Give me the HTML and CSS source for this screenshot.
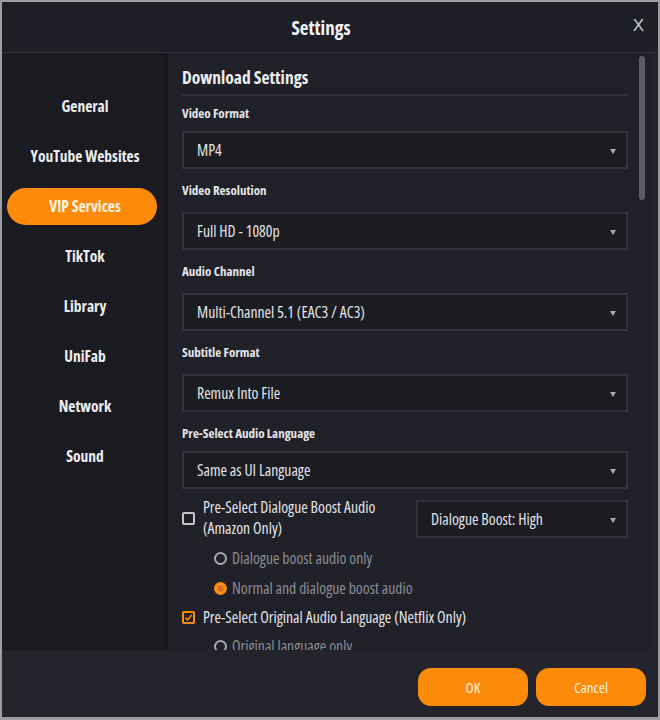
FILE: index.html
```html
<!DOCTYPE html>
<html>
<head>
<meta charset="utf-8">
<link rel="stylesheet" href="styles.css">
</head>
<body>
<div class="window">
  <header class="titlebar">
    <div class="title">Settings</div>
    <div class="close">X</div>
  </header>
  <div class="main">
    <nav class="sidebar">
      <div class="nav-item">General</div>
      <div class="nav-item">YouTube Websites</div>
      <div class="nav-item active">VIP Services</div>
      <div class="nav-item">TikTok</div>
      <div class="nav-item">Library</div>
      <div class="nav-item">UniFab</div>
      <div class="nav-item">Network</div>
      <div class="nav-item">Sound</div>
    </nav>
    <section class="content">
      <div class="scroll">
        <h2 class="section-title">Download Settings</h2>
        <div class="field first">
          <div class="label">Video Format</div>
          <div class="select"><span>MP4</span><i class="arrow"></i></div>
        </div>
        <div class="field">
          <div class="label">Video Resolution</div>
          <div class="select"><span>Full HD - 1080p</span><i class="arrow"></i></div>
        </div>
        <div class="field">
          <div class="label">Audio Channel</div>
          <div class="select"><span>Multi-Channel 5.1 (EAC3 / AC3)</span><i class="arrow"></i></div>
        </div>
        <div class="field">
          <div class="label">Subtitle Format</div>
          <div class="select"><span>Remux Into File</span><i class="arrow"></i></div>
        </div>
        <div class="field last">
          <div class="label">Pre-Select Audio Language</div>
          <div class="select"><span>Same as UI Language</span><i class="arrow"></i></div>
        </div>
        <div class="check-row">
          <div class="check-left">
            <span class="checkbox"></span>
            <span class="check-text">Pre-Select Dialogue Boost Audio<br>(Amazon Only)</span>
          </div>
          <div class="select small"><span>Dialogue Boost: High</span><i class="arrow"></i></div>
        </div>
        <div class="radio-row first"><span class="radio"></span><span>Dialogue boost audio only</span></div>
        <div class="radio-row"><span class="radio on"></span><span>Normal and dialogue boost audio</span></div>
        <div class="check-row2">
          <span class="checkbox on"><svg viewBox="0 0 10 10" width="9" height="9"><path d="M1.5 5.2 L4 7.6 L8.6 2.2" fill="none" stroke="#ff8c00" stroke-width="1.6"/></svg></span>
          <span class="check-text">Pre-Select Original Audio Language (Netflix Only)</span>
        </div>
        <div class="radio-row"><span class="radio"></span><span>Original language only</span></div>
      </div>
      <div class="scrollbar"></div>
    </section>
  </div>
  <footer class="footer">
    <button class="btn">OK</button>
    <button class="btn">Cancel</button>
  </footer>
</div>
</body>
</html>
```
FILE: styles.css
```css
* { box-sizing: border-box; }
html, body { margin: 0; padding: 0; }
body {
  width: 660px;
  height: 720px;
  background: #8d8e92;
  font-family: "Open Sans", "Noto Sans", "Liberation Sans", sans-serif;
  font-stretch: 75%;
  color: #e8e8ea;
  overflow: hidden;
}
.window {
  width: 660px;
  height: 720px;
  border: 2px solid #9c9da1;
  border-bottom-width: 3px;
  background: #22232b;
  display: flex;
  flex-direction: column;
}
.titlebar {
  height: 51px;
  flex: none;
  background: #1e1f26;
  border-bottom: 1px solid #30313a;
  display: flex;
  align-items: center;
  justify-content: center;
  position: relative;
}
.title {
  font-size: 19px;
  font-weight: bold;
  color: #f2f2f4;
  margin-left: -18px;
  margin-top: 2px;
}
.close {
  position: absolute;
  right: 14px;
  top: 14px;
  font-size: 17px;
  color: #c9cad0;
  font-family: "Liberation Sans", sans-serif;
  font-stretch: normal;
}
.main {
  height: 597px;
  flex: none;
  display: flex;
}
.sidebar {
  width: 164px;
  flex: none;
  background: #1a1b21;
  padding-top: 35px;
  padding-left: 5px;
  padding-right: 9px;
  display: flex;
  flex-direction: column;
  gap: 13px;
}
.nav-item {
  height: 37px;
  line-height: 37px;
  text-align: center;
  font-size: 15.5px;
  font-weight: bold;
  color: #eeeef0;
  border-radius: 19px;
  padding-left: 6px;
}
.nav-item.active {
  background: #fd8b0a;
  color: #fff4e6;
}
.content {
  flex: 1;
  background: #1f2028;
  border-left: 2px solid #17181d;
  margin-right: 6px;
  position: relative;
  overflow: hidden;
}
.scroll {
  padding: 11px 24px 0 14px;
}
.section-title {
  margin: 0;
  font-size: 17.5px;
  font-weight: bold;
  color: #eeeef0;
  height: 32px;
  line-height: 26px;
  border-bottom: 2px solid #2e2f38;
  margin-bottom: 8px;
}
.field { margin-bottom: 12px; }
.label {
  font-size: 13px;
  font-weight: bold;
  color: #e6e6e9;
  height: 18px;
  line-height: 18px;
  margin-bottom: 13px;
}
.field.first .label { margin-bottom: 9px; }
.field.last .label { margin-bottom: 9px; }
.field.last { margin-bottom: 11px; }
.select {
  height: 38px;
  border: 2px solid #31323c;
  background: #1b1c22;
  display: flex;
  align-items: center;
  justify-content: space-between;
  padding: 0 10px 0 13px;
  font-size: 15.7px;
  color: #e4e4e8;
}
.arrow {
  width: 0; height: 0;
  border-left: 3.5px solid transparent;
  border-right: 3.5px solid transparent;
  border-top: 5px solid #a9aab3;
  margin-top: 2px;
}
.check-row {
  display: flex;
  align-items: flex-start;
  justify-content: space-between;
}
.check-left {
  display: flex;
  align-items: flex-start;
  gap: 8px;
}
.check-left .check-text { margin-top: -3px; }
.check-text {
  font-size: 15.7px;
  line-height: 21px;
  color: #e4e4e8;
}
.checkbox {
  width: 13px;
  height: 13px;
  border: 2px solid #c5c6cc;
  border-radius: 2px;
  margin-top: 12px;
  flex: none;
  display: flex;
  align-items: center;
  justify-content: center;
}
.checkbox.on { border-color: #ff8c00; }
.select.small {
  width: 212px;
  flex: none;
  padding-left: 13px;
}
.radio-row {
  display: flex;
  align-items: center;
  gap: 5px;
  padding-left: 32px;
  height: 30px;
  font-size: 15.7px;
  color: #8c8d95;
}
.radio-row.first { margin-top: 4px; }
.radio {
  width: 13px;
  height: 13px;
  border: 2px solid #a6a7ae;
  border-radius: 50%;
  flex: none;
}
.radio.on {
  border-color: #ff8c00;
  background: #e0731f;
  box-shadow: inset 0 0 0 1px #ffa240;
}
.check-row2 {
  display: flex;
  align-items: center;
  gap: 8px;
  height: 28px;
}
.check-row2 .checkbox { margin-top: 0; }
.scrollbar {
  position: absolute;
  top: 3px;
  right: 7px;
  width: 6px;
  height: 144px;
  background: #5b5c66;
  border-radius: 3px;
}
.footer {
  flex: 1;
  display: flex;
  justify-content: flex-end;
  align-items: flex-start;
  gap: 8px;
  padding: 18px 12px 0 0;
  background: #22232b;
}
.btn {
  width: 110px;
  height: 38px;
  border: none;
  border-radius: 13px;
  background: #fd8b0a;
  color: #fff1e0;
  font-family: inherit;
  font-stretch: inherit;
  font-size: 15px;
}
```
